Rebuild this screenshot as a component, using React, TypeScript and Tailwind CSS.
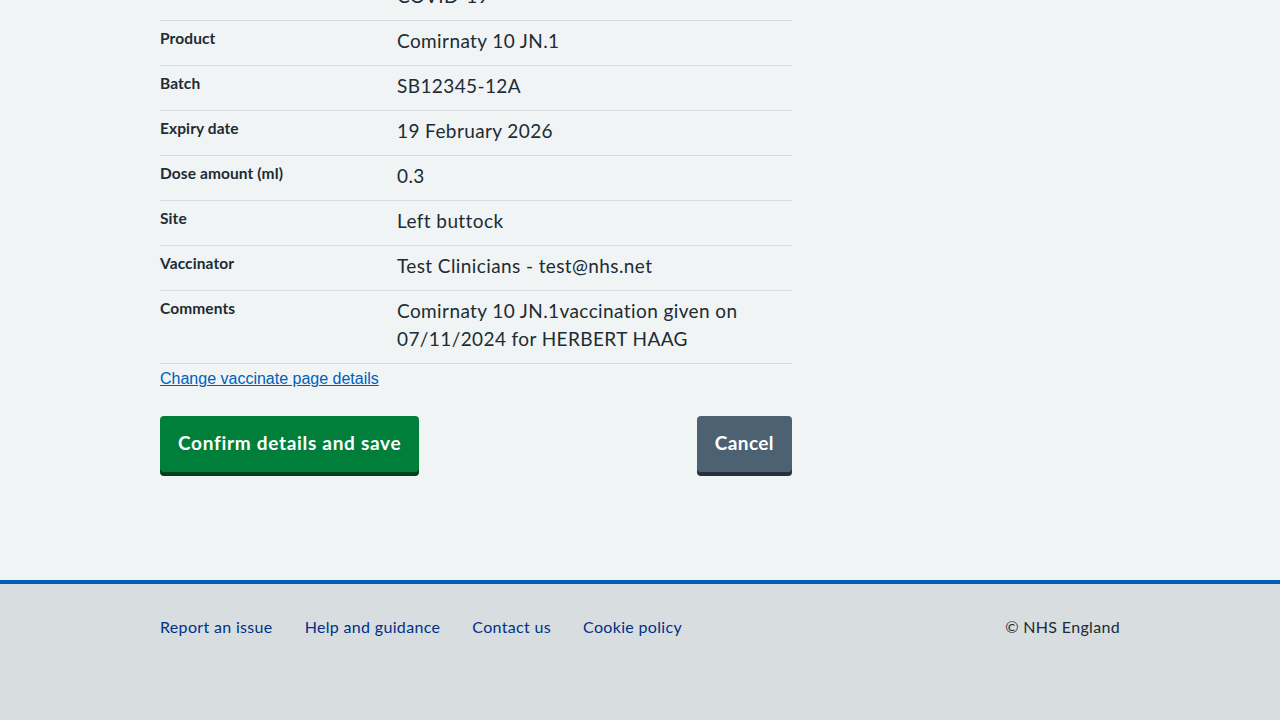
import React from "react";

const rows: { k: string; v: string }[] = [
  { k: "Name", v: "HERBERT HAAG" },
  { k: "Vaccine", v: "COVID-19" },
  { k: "Product", v: "Comirnaty 10 JN.1" },
  { k: "Batch", v: "SB12345-12A" },
  { k: "Expiry date", v: "19 February 2026" },
  { k: "Dose amount (ml)", v: "0.3" },
  { k: "Site", v: "Left buttock" },
  { k: "Vaccinator", v: "Test Clinicians - test@nhs.net" },
  { k: "Comments", v: "Comirnaty 10 JN.1vaccination given on 07/11/2024 for HERBERT HAAG" },
];

const font = { fontFamily: "Lato, 'Noto Sans', sans-serif" };

export default function App() {
  return (
    <div
      className="h-[720px] overflow-hidden flex flex-col justify-end bg-[#f0f4f5] text-[#212b32]"
      style={font}
    >
      <main className="shrink-0 w-[960px] mx-auto">
        <div className="w-[632px]">
          <dl className="flex flex-col">
            {rows.map((r) => (
              <div
                key={r.k}
                className="grid grid-cols-[237px_1fr] border-b border-[#d8dde0] pt-[6px] pb-[10px]"
              >
                <dt className="font-bold text-[15.5px] leading-[20px] pt-[1px] tracking-[0.1px]">{r.k}</dt>
                <dd className="text-[19px] leading-[28px] tracking-[0.4px]">{r.v}</dd>
              </div>
            ))}
          </dl>
          <a
            href="#"
            className="block mt-[3px] w-max text-[16px] leading-[24px] text-[#005eb8] underline"
            style={{ fontFamily: "'Liberation Sans', Arial, sans-serif" }}
          >
            Change vaccinate page details
          </a>
          <div className="flex justify-between mt-[25px] mb-[108px]">
            <button className="bg-[#007f3b] text-white font-bold text-[19px] leading-[28px] tracking-[0.7px] px-[18px] pt-[13px] pb-[15px] rounded-[4px] shadow-[0_4px_0_#00401e]">
              Confirm details and save
            </button>
            <button className="bg-[#4c6272] text-white font-bold text-[19px] leading-[28px] tracking-[0.4px] px-[18px] pt-[13px] pb-[15px] rounded-[4px] shadow-[0_4px_0_#263139]">
              Cancel
            </button>
          </div>
        </div>
      </main>
      <footer className="shrink-0 bg-[#d8dde0] border-t-4 border-[#005eb8] h-[140px]">
        <div className="w-[960px] mx-auto flex justify-between pt-[31px] text-[16px] leading-[24px] tracking-[0.33px]">
          <ul className="flex gap-[32px] text-[#003087]">
            <li><a href="#">Report an issue</a></li>
            <li><a href="#">Help and guidance</a></li>
            <li><a href="#">Contact us</a></li>
            <li><a href="#">Cookie policy</a></li>
          </ul>
          <p className="text-[#212b32]">© NHS England</p>
        </div>
      </footer>
    </div>
  );
}
